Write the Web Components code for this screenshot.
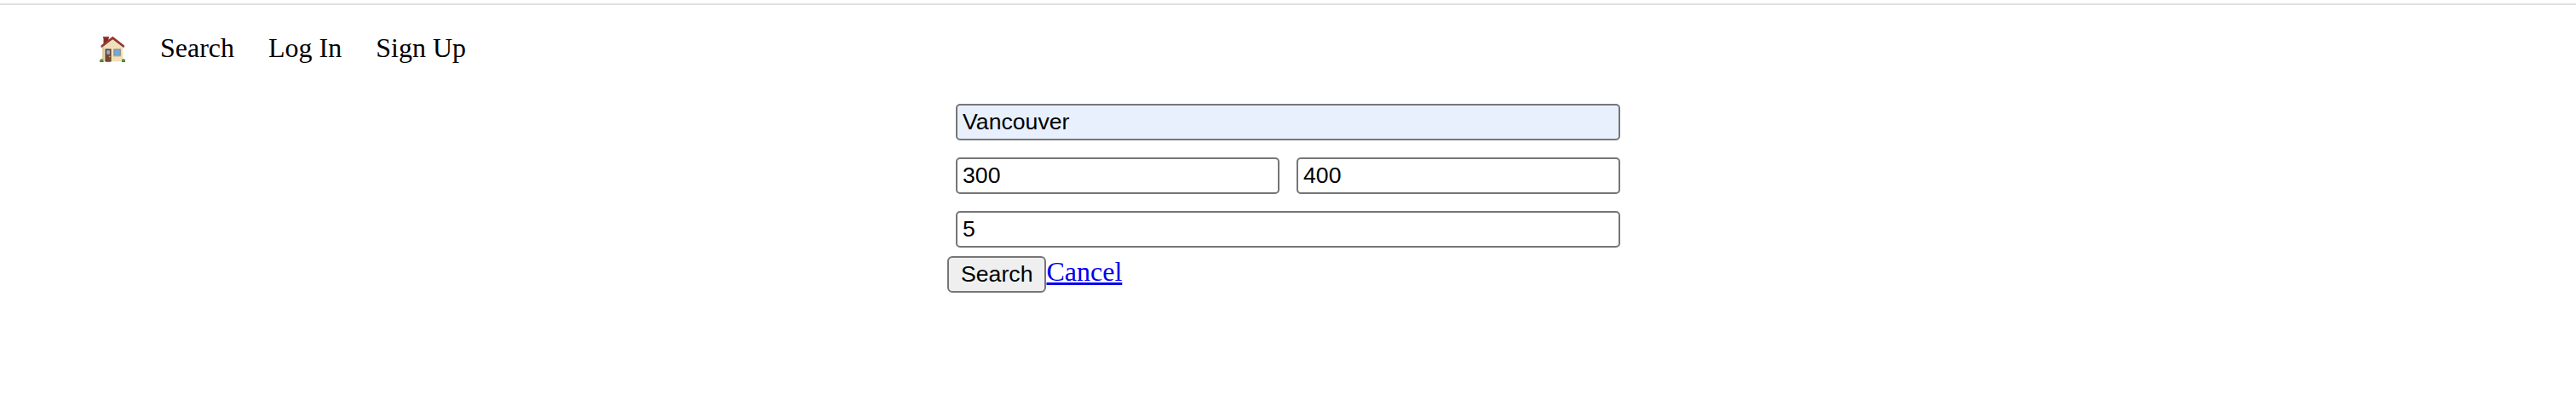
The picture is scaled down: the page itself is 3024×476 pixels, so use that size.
<!DOCTYPE html>
<html lang="en">
<head>
<meta charset="utf-8">
<title>Search</title>
<style>
html,body{margin:0;background:#fff;color:#000;font:32px/36px "Liberation Serif","Times New Roman",serif}
body{height:476px;overflow:hidden}
</style>
</head>
<body>
<search-page></search-page>
<script>
const define = (name, html) => customElements.define(name, class extends HTMLElement {
  constructor() {
    super();
    this.attachShadow({mode: 'open'}).innerHTML = html;
  }
});

define('house-icon', `<style>:host{display:block;width:32px;height:32px;margin-top:4px}svg{display:block}</style>
<svg width="32" height="32" viewBox="0 0 32 32" aria-hidden="true">
<path d="M5.500 2h6v10h-6z" fill="#7d2c25"/><path d="M5 1h7v1.800H5z" fill="#9c4036"/>
<path d="M4.300 13 16.300 3.200 28.300 13v17.300H4.300z" fill="#f0dfba"/>
<path d="M4.300 13h2v17.300h-2z" fill="#dcc79c"/>
<path d="M2.700 13.400 16.300 3 29.700 13.400" fill="none" stroke="#50302c" stroke-width="1.600"/>
<path d="M3 12.200 16.300 1.900 29.500 12.200" fill="none" stroke="#a8362e" stroke-width="2"/>
<path d="M7.500 15.500h7v15h-7z" fill="#5c3326"/><path d="M8.500 16.500h5v14h-5z" fill="#7a4935"/>
<path d="M9.200 17.200h3.700v4.500H9.200z" fill="#83b7df"/><circle cx="12.800" cy="24.500" r=".7" fill="#e5ba62"/>
<path d="M17.300 15.500h8.500v8.200h-8.500z" fill="#8c8173"/><path d="M18.300 16.500h6.500v6.200h-6.500z" fill="#6caae0"/>
<path d="M17 23.300h9.100v1.100H17z" fill="#b9a98d"/>
<path d="M1.100 30.500c-.4-2.300.8-3.700 2.200-3.300 1.300-.6 2.200.8 2 3.300zM27 30.500c-.3-2.700.8-3.800 2.200-3.300 1.500-.4 2.200 1.100 1.700 3.300z" fill="#649a43"/>
<path d="M1 29.500h4.500V31H1zM27 29.500h4V31h-4z" fill="#4c7936"/>
</svg>`);

define('nav-link', `<style>:host{display:block}a{color:inherit;text-decoration:none}</style><a href="#"><slot></slot></a>`);

define('nav-bar', `<style>:host{display:block;border-top:2px solid #e0e0e0;margin-top:4px;height:84px}
nav{display:flex;align-items:center;gap:40px;padding:32px 0 0 116px;height:36px}</style><nav><slot></slot></nav>`);

customElements.define('text-field', class extends HTMLElement {
  constructor() {
    super();
    this.attachShadow({mode: 'open'}).innerHTML = `<style>:host{display:block;flex:1;min-width:0}
input{display:block;box-sizing:border-box;width:100%;height:43px;margin:0;padding:1px 6px 2px;border:2px solid #767676;border-radius:5px;background:#fff;color:#000;font:26.667px "Liberation Sans",Arial,sans-serif;outline:0}
:host([filled]) input{background:#e8f0fe}</style><input type="text">`;
    const input = this.shadowRoot.querySelector('input');
    input.value = this.getAttribute('value');
    input.setAttribute('aria-label', this.getAttribute('label'));
  }
});

define('field-row', `<style>:host{display:flex;gap:20px;margin:0 10px 20px}:host(:last-of-type){margin-bottom:0}</style><slot></slot>`);

define('form-actions', `<style>:host{display:flex;align-items:flex-start;margin-top:10px}
button{box-sizing:border-box;height:43px;margin:0;padding:0 14px 1px;border:2px solid #767676;border-radius:6px;background:#efefef;color:#000;font:26.667px "Liberation Sans",Arial,sans-serif}
a{color:#00e;text-decoration:underline;text-decoration-thickness:3px;text-underline-offset:2px}</style>
<button type="button">Search</button><a href="#">Cancel</a>`);

define('search-form', `<style>:host{display:block;width:800px;margin:32px auto 0}</style><slot></slot>`);

define('search-page', `<style>:host{display:flow-root}</style>
<nav-bar><house-icon></house-icon><nav-link>Search</nav-link><nav-link>Log In</nav-link><nav-link>Sign Up</nav-link></nav-bar>
<search-form>
<field-row><text-field filled label="City" value="Vancouver"></text-field></field-row>
<field-row><text-field label="Minimum" value="300"></text-field><text-field label="Maximum" value="400"></text-field></field-row>
<field-row><text-field label="Count" value="5"></text-field></field-row>
<form-actions></form-actions>
</search-form>`);
</script>
</body>
</html>
